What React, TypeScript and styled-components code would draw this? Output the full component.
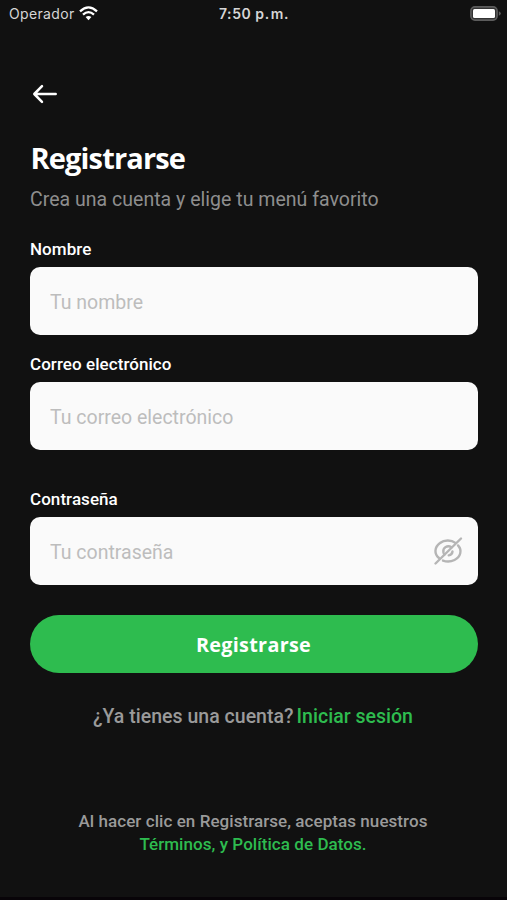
import React from "react";
import styled, { createGlobalStyle } from "styled-components";

const GlobalStyle = createGlobalStyle`
  * { box-sizing: border-box; }
  body { margin: 0; background: #111111; }
`;

const Screen = styled.main`
  width: 507px;
  height: 900px;
  overflow: hidden;
  background: #111111;
  border-bottom: 3px solid #080408;
  color: #ffffff;
  font-family: Roboto, sans-serif;
  display: flex;
  flex-direction: column;
`;

const StatusBar = styled.header`
  height: 28px;
  padding: 0 6px 0 9px;
  display: grid;
  grid-template-columns: 1fr auto 1fr;
  align-items: center;
  font-family: Inter, sans-serif;
  color: #d6d6d6;
`;

const Carrier = styled.div`
  display: flex;
  align-items: center;
  gap: 4px;
  font-size: 14px;
  line-height: 28px;
  letter-spacing: 0.35px;

  svg { margin-top: -2px; }
`;

const Clock = styled.time`
  font-size: 14px;
  font-weight: 600;
  letter-spacing: 0.55px;
  line-height: 28px;
  white-space: nowrap;
  margin-right: 2px;
`;

const Period = styled.span`
  word-spacing: -2.6px;
`;

const BatterySlot = styled.div`
  display: flex;
  justify-content: flex-end;
  padding-bottom: 2px;
`;

const Content = styled.div`
  padding: 0 29px 0 30px;
  display: flex;
  flex-direction: column;
`;

const BackButton = styled.button`
  width: 30px;
  height: 24px;
  margin-top: 54px;
  padding: 0;
  border: 0;
  background: none;
  display: flex;
  align-items: center;
`;

const Title = styled.h1`
  margin: 31px 0 0;
  padding-left: 0.5px;
  height: 42px;
  font: 700 29px/42px "Open Sans", sans-serif;
  letter-spacing: -0.85px;
`;

const Subtitle = styled.p`
  margin: 9px 0 0;
  font-size: 19.5px;
  line-height: 24px;
  letter-spacing: 0.02px;
  color: #8e8e8e;
`;

const Field = styled.label<{ $top: number }>`
  margin-top: ${(p) => p.$top}px;
  display: flex;
  flex-direction: column;
`;

const FieldName = styled.span`
  font-size: 17px;
  font-weight: 500;
  line-height: 20px;
  letter-spacing: 0.06px;
  margin-bottom: 8px;
`;

const InputBox = styled.span`
  height: 68px;
  padding: 0 15px 0 20px;
  border-radius: 10px;
  background: #fafafa;
  display: flex;
  align-items: center;
`;

const Input = styled.input`
  flex: 1;
  min-width: 0;
  height: 32px;
  padding: 2px 0 0;
  border: 0;
  outline: 0;
  background: none;
  font: 400 19.5px/30px Roboto, sans-serif;
  color: #222222;
  &::placeholder { color: #bdbdbd; opacity: 1; }
`;

const SubmitButton = styled.button`
  height: 58px;
  margin-top: 30px;
  padding: 1px 1px 0 0;
  border: 0;
  border-radius: 30px;
  background: #2ebc4f;
  color: #ffffff;
  font: 700 19.8px/57px "Open Sans", sans-serif;
  letter-spacing: 0.3px;
`;

const LoginLine = styled.p`
  margin: 32px 2px 0 0;
  display: flex;
  justify-content: center;
  gap: 3px;
  font-size: 19.5px;
  font-weight: 500;
  line-height: 24px;
  letter-spacing: 0.02px;
  color: #9a9a9a;
`;

const Accent = styled.a`
  color: #2ebc4f;
`;

const Legal = styled.p`
  margin: 81px 2px 0 0;
  text-align: center;
  font-size: 17px;
  font-weight: 500;
  line-height: 22.5px;
  letter-spacing: 0.06px;
  color: #9a9a9a;
`;

function WifiIcon() {
  return (
    <svg width="19" height="15" viewBox="0 0 19 15" fill="none" stroke="#ffffff" strokeWidth="2.3">
      <path d="M1 5.3Q9.5-2.5 18 5.3" />
      <path d="M4 8.6Q9.5 3.6 15 8.6" />
      <path d="M9.5 14.2 6.6 11.1Q9.5 8.7 12.4 11.1Z" fill="#ffffff" stroke="none" />
    </svg>
  );
}

function BatteryIcon() {
  return (
    <svg width="31" height="15" viewBox="0 0 31 15">
      <rect x="0.9" y="0.9" width="26.2" height="13.2" rx="4" fill="#333333" stroke="#5c5c5c" strokeWidth="1.6" />
      <rect x="3" y="3" width="22" height="9" rx="1.5" fill="#ffffff" />
      <path d="M28.8 5.2q2 .8 2 2.3t-2 2.3z" fill="#5c5c5c" />
    </svg>
  );
}

function BackIcon() {
  return (
    <svg width="30" height="24" viewBox="0 0 30 24" fill="none" stroke="#ffffff" strokeWidth="2.5" strokeLinecap="round" strokeLinejoin="round">
      <path d="M25.7 12H4.5M12 4.2 4.3 12l7.7 7.8" />
    </svg>
  );
}

function HiddenEyeIcon() {
  return (
    <svg width="30" height="30" viewBox="0 0 30 30" fill="none" stroke="#b5b5b5" strokeWidth="2.4" strokeLinecap="round">
      <path d="M28 2.5 2.5 27.5" />
      <path d="M22.4 6.9C18.5 3.9 11.5 3.4 7 7 1 11.5 1.2 18 6 22" />
      <path d="M25 9.4C29.6 14.5 27.4 21 21.5 24 18 25.7 13.4 25.8 10 24.6" />
      <path d="M18.5 11.3C14.5 8.7 9.6 11.6 10.4 16.2q.3 1.4 1.1 2.3" />
      <path d="M19.5 15.5q-.4 3.3-3.8 3.9" />
    </svg>
  );
}

export default function App() {
  return (
    <>
      <GlobalStyle />
      <Screen>
        <StatusBar>
          <Carrier>Operador<WifiIcon /></Carrier>
          <Clock>7:50 <Period>p. m.</Period></Clock>
          <BatterySlot><BatteryIcon /></BatterySlot>
        </StatusBar>
        <Content>
          <BackButton aria-label="Volver"><BackIcon /></BackButton>
          <Title>Registrarse</Title>
          <Subtitle>Crea una cuenta y elige tu menú favorito</Subtitle>
          <Field $top={27}>
            <FieldName>Nombre</FieldName>
            <InputBox><Input placeholder="Tu nombre" /></InputBox>
          </Field>
          <Field $top={19}>
            <FieldName>Correo electrónico</FieldName>
            <InputBox><Input type="email" placeholder="Tu correo electrónico" /></InputBox>
          </Field>
          <Field $top={39}>
            <FieldName>Contraseña</FieldName>
            <InputBox>
              <Input type="password" placeholder="Tu contraseña" />
              <HiddenEyeIcon />
            </InputBox>
          </Field>
          <SubmitButton>Registrarse</SubmitButton>
          <LoginLine>
            <span>¿Ya tienes una cuenta?</span>
            <Accent>Iniciar sesión</Accent>
          </LoginLine>
          <Legal>
            Al hacer clic en Registrarse, aceptas nuestros
            <br />
            <Accent>Términos, y Política de Datos.</Accent>
          </Legal>
        </Content>
      </Screen>
    </>
  );
}
